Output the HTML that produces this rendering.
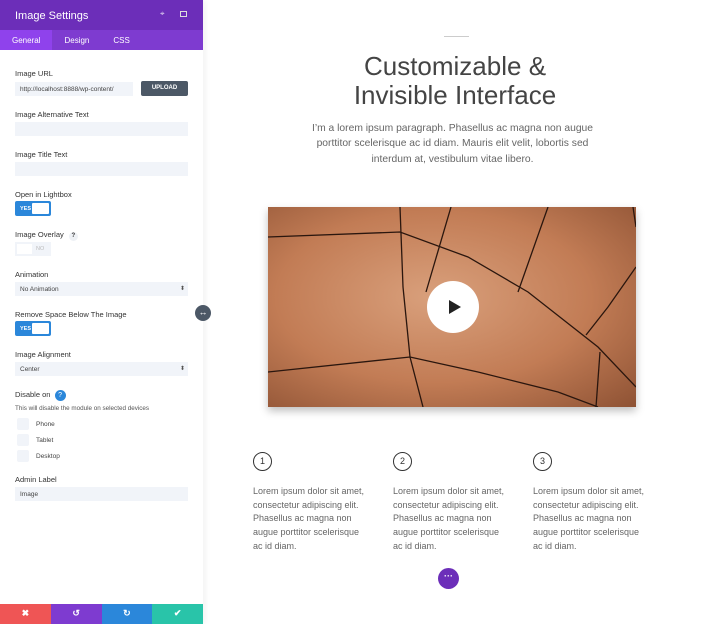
<!DOCTYPE html>
<html><head><meta charset="utf-8"><style>
*{box-sizing:border-box;margin:0;padding:0}
body{width:702px;height:624px;overflow:hidden;background:#fff;font-family:"Liberation Sans",sans-serif;position:relative}
.panel{position:absolute;left:0;top:0;width:203px;height:624px;background:#fff;box-shadow:2px 0 6px rgba(0,0,0,.06)}
.hdr{height:30px;background:#6c2eb9;color:#fff;font-size:11px;padding:10px 0 0 15px}
.tabs{height:20px;background:#7e3bd0;display:flex;font-size:8px;color:#fff}
.tabs div{padding:6px 12px 0}
.tabs .on{background:#8f42ec}
.lbl{position:absolute;left:15px;font-size:7.5px;color:#333}
.inp{position:absolute;left:15px;width:173px;height:14px;background:#f1f4f9;font-size:6.5px;color:#444;padding:4px 0 0 5px}
.tog{position:absolute;left:15px;width:36px;height:15px;background:#2b87da;border-radius:2px}
.tog b{position:absolute;right:2px;top:2px;width:17px;height:11px;background:#fff;border-radius:1px}
.tog span{position:absolute;left:5px;top:5px;font-size:5.5px;line-height:6px;color:#fff;font-weight:bold}
.cb{position:absolute;left:17px;width:12px;height:12px;background:#f1f4f9;border-radius:2px}
.cbl{position:absolute;left:36px;font-size:6.5px;color:#444}
.sel:after{content:"⬍";position:absolute;right:3px;top:3px;font-size:6px;color:#555}
.foot{position:absolute;top:604px;left:0;width:203px;height:20px;display:flex;color:#fff;font-size:9px;font-weight:bold}
.foot div{flex:1;text-align:center;padding-top:4px}
.num{position:absolute;top:452px;width:19px;height:19px;border:1.3px solid #333;border-radius:50%;font-size:9px;text-align:center;line-height:17px;color:#333}
.col{position:absolute;top:485px;font-size:9px;line-height:13.7px;color:#666;width:118px}
</style></head><body>
<div class="panel">
<div class="hdr">Image Settings<span style="position:absolute;left:160px;top:9px;font-size:8px;opacity:.8">⌖</span><span style="position:absolute;left:180px;top:11px;width:7px;height:6px;border:1.3px solid #ddd;display:block"></span></div>
<div class="tabs"><div class="on">General</div><div>Design</div><div>CSS</div></div>
<div class="lbl" style="top:69px">Image URL</div>
<div class="inp" style="top:82px;width:118px">http://localhost:8888/wp-content/</div>
<div style="position:absolute;left:141px;top:81px;width:47px;height:15px;background:#4c5866;border-radius:2px;color:#fff;font-size:6px;font-weight:bold;text-align:center;line-height:15px">UPLOAD</div>
<div class="lbl" style="top:110px">Image Alternative Text</div>
<div class="inp" style="top:122px"></div>
<div class="lbl" style="top:150px">Image Title Text</div>
<div class="inp" style="top:162px"></div>
<div class="lbl" style="top:190px">Open in Lightbox</div>
<div class="tog" style="top:201px"><span>YES</span><b></b></div>
<div class="lbl" style="top:230px">Image Overlay <span style="display:inline-block;width:9px;height:9px;background:#eef1f5;border-radius:50%;font-size:6px;text-align:center;line-height:9px;font-weight:bold;margin-left:3px">?</span></div>
<div style="position:absolute;left:15px;top:242px;width:36px;height:14px;background:#f1f4f9"><b style="position:absolute;left:2px;top:2px;width:15px;height:10px;background:#fff"></b><span style="position:absolute;left:21px;top:4px;font-size:5.5px;color:#bbb">NO</span></div>
<div class="lbl" style="top:270px">Animation</div>
<div class="inp sel" style="top:282px">No Animation</div>
<div class="lbl" style="top:310px">Remove Space Below The Image</div>
<div class="tog" style="top:321px"><span>YES</span><b></b></div>
<div class="lbl" style="top:350px">Image Alignment</div>
<div class="inp sel" style="top:362px">Center</div>
<div class="lbl" style="top:390px">Disable on <span style="display:inline-block;width:11px;height:11px;background:#2b87da;color:#fff;border-radius:50%;font-size:7px;text-align:center;line-height:11px;margin-left:2px">?</span></div>
<div class="lbl" style="top:405px;font-size:6.3px;color:#555">This will disable the module on selected devices</div>
<div class="cb" style="top:418px"></div><div class="cbl" style="top:421px">Phone</div>
<div class="cb" style="top:434px"></div><div class="cbl" style="top:437px">Tablet</div>
<div class="cb" style="top:450px"></div><div class="cbl" style="top:453px">Desktop</div>
<div class="lbl" style="top:475px">Admin Label</div>
<div class="inp" style="top:487px">Image</div>
<div class="foot"><div style="background:#ef5555">✖</div><div style="background:#7e3bd0">↺</div><div style="background:#2b87da">↻</div><div style="background:#29c4a9">✔</div></div>
</div>
<div style="position:absolute;left:195px;top:305px;width:16px;height:16px;border-radius:50%;background:#4c5866;color:#fff;font-size:9px;text-align:center;line-height:15px">↔</div>
<div style="position:absolute;left:444px;top:36px;width:25px;height:1px;background:#ccc"></div>
<div style="position:absolute;left:230px;width:450px;top:52px;text-align:center;font-size:26px;line-height:29px;color:#444">Customizable &amp;<br>Invisible Interface</div>
<div style="position:absolute;left:305px;width:295px;top:121px;text-align:center;font-size:10.3px;line-height:15.3px;color:#666">I’m a lorem ipsum paragraph. Phasellus ac magna non augue porttitor scelerisque ac id diam. Mauris elit velit, lobortis sed interdum at, vestibulum vitae libero.</div>
<div style="position:absolute;left:268px;top:207px;width:368px;height:200px;background:radial-gradient(ellipse at 45% 45%,#d9a07c,#c27c55 55%,#8e5234);box-shadow:0 4px 8px rgba(0,0,0,.25);overflow:hidden">
<svg width="368" height="200" style="position:absolute;left:0;top:0" fill="none" stroke="#2a160e" stroke-width="1.3">
<path d="M132 0 L135 80 L142 150 L155 200"/>
<path d="M0 30 L132 25 L200 50 L260 85 L330 140 L368 180"/>
<path d="M0 165 L142 150 L210 165 L290 185 L330 200"/>
<path d="M183 0 L158 85"/><path d="M280 0 L250 85"/><path d="M365 0 L368 20"/>
<path d="M368 60 L340 100 L318 128"/><path d="M332 145 L328 200"/>
</svg>
<div style="position:absolute;left:159px;top:74px;width:52px;height:52px;border-radius:50%;background:#fff"></div>
<div style="position:absolute;left:181px;top:93px;width:0;height:0;border-left:12px solid #222;border-top:7.5px solid transparent;border-bottom:7.5px solid transparent"></div>
</div>
<div class="num" style="left:253px">1</div><div class="num" style="left:393px">2</div><div class="num" style="left:533px">3</div>
<div class="col" style="left:253px">Lorem ipsum dolor sit amet, consectetur adipiscing elit. Phasellus ac magna non augue porttitor scelerisque ac id diam.</div>
<div class="col" style="left:393px">Lorem ipsum dolor sit amet, consectetur adipiscing elit. Phasellus ac magna non augue porttitor scelerisque ac id diam.</div>
<div class="col" style="left:533px">Lorem ipsum dolor sit amet, consectetur adipiscing elit. Phasellus ac magna non augue porttitor scelerisque ac id diam.</div>
<div style="position:absolute;left:438px;top:568px;width:21px;height:21px;border-radius:50%;background:#6c2eb9;color:#fff;font-size:9px;text-align:center;line-height:17px;font-weight:bold">···</div>
</body></html>
